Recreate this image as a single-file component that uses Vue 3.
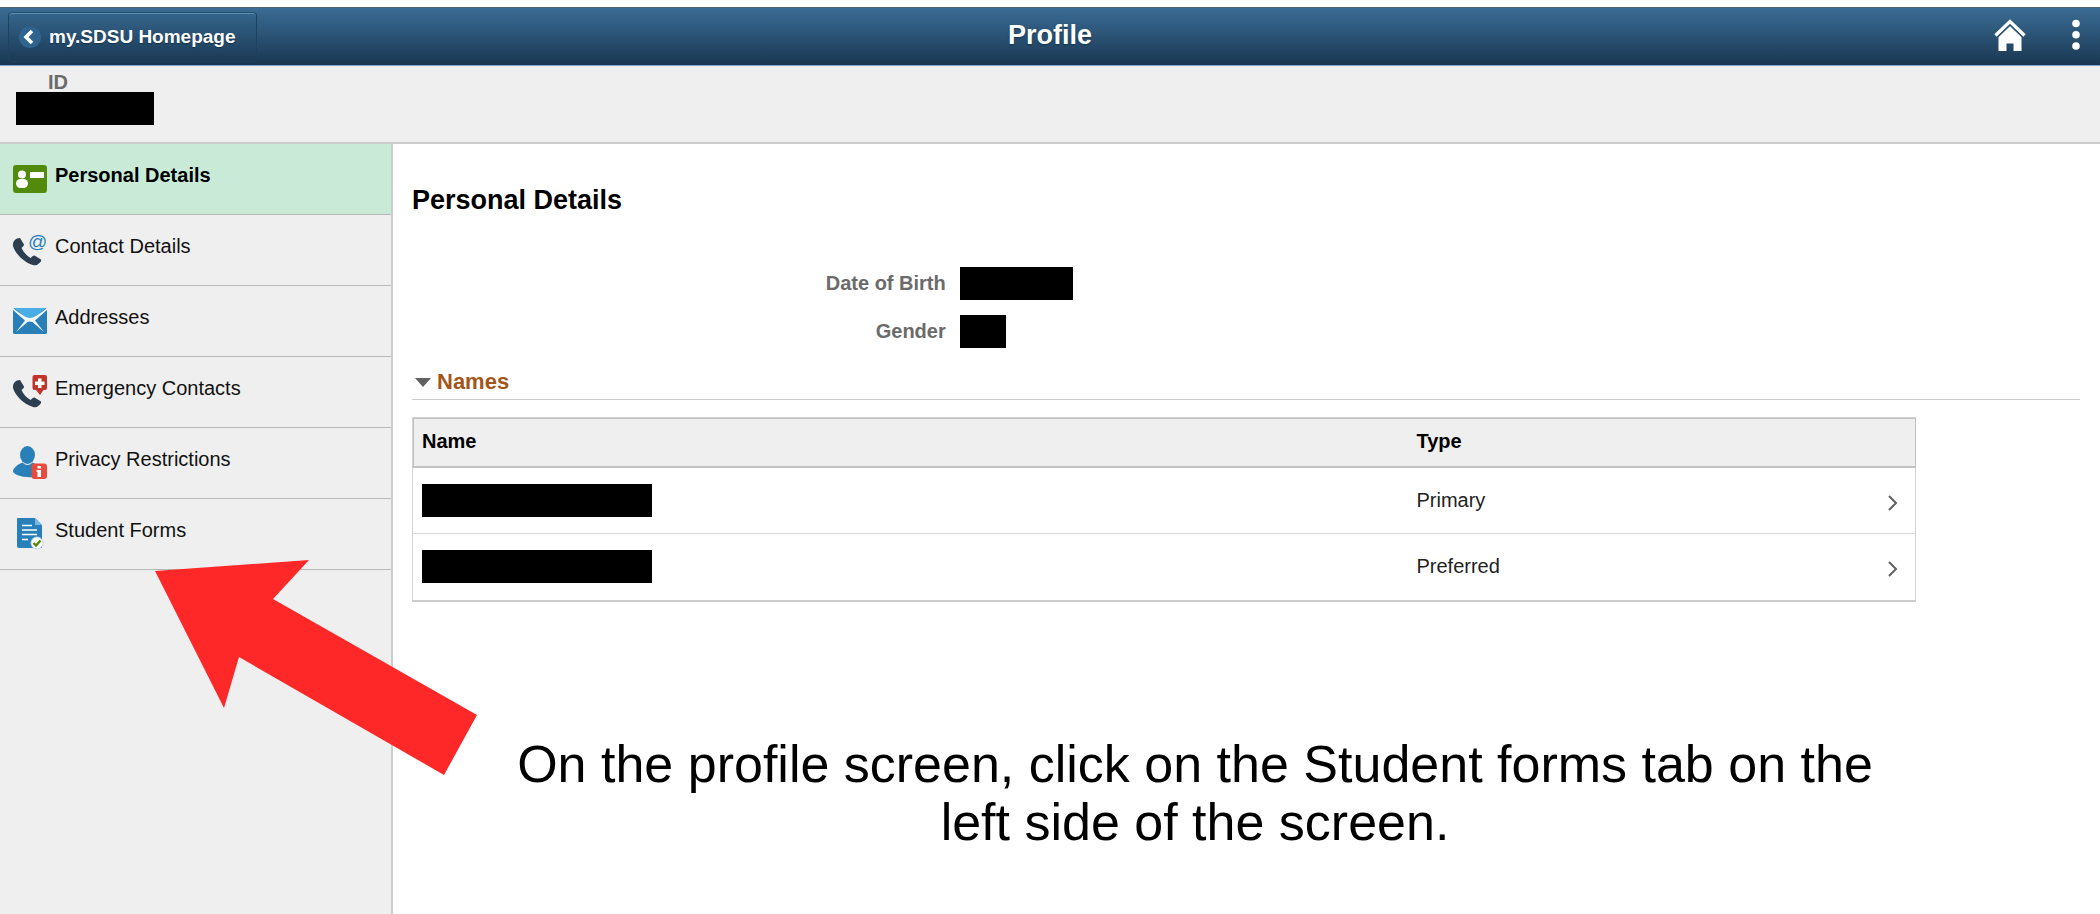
<template>
  <div class="page">
    <header class="topbar">
      <button class="back" type="button">
        <svg class="back-icon" viewBox="0 0 22 22" aria-hidden="true">
          <circle cx="11" cy="11" r="11" fill="#2f648e" />
          <path d="M13 5 L7 11 L13 17" fill="none" stroke="#fff" stroke-width="3.6" />
        </svg>
        <span>my.SDSU Homepage</span>
      </button>
      <h1 class="title">Profile</h1>
      <div class="actions">
        <button class="icon-button" type="button" aria-label="Home">
          <svg class="home" viewBox="0 0 32 32" aria-hidden="true">
            <path d="M1.5 16.5 L16 2.5 L30.5 16.5" fill="none" stroke="#fff" stroke-width="3.4" />
            <path d="M16 7 L27.5 18 V32 H19.5 V24.5 H12.5 V32 H4.5 V18 Z" fill="#fff" />
            <path d="M3.5 18 L16 6 L28.5 18" fill="none" stroke="#2b5677" stroke-width="1.2" />
          </svg>
        </button>
        <button class="icon-button" type="button" aria-label="Actions">
          <svg class="dots" viewBox="0 0 8 32" aria-hidden="true">
            <circle cx="4" cy="4.5" r="3.8" fill="#fff" />
            <circle cx="4" cy="15.7" r="3.8" fill="#fff" />
            <circle cx="4" cy="27" r="3.8" fill="#fff" />
          </svg>
        </button>
      </div>
    </header>

    <div class="id-bar">
      <div class="id-label">ID</div>
      <div class="redacted redacted--id"></div>
    </div>

    <div class="body">
      <nav class="sidebar">
        <a
          v-for="item in items"
          :key="item.icon"
          href="#"
          class="nav-item"
          :class="{ active: item.icon === selected }"
          @click.prevent="selected = item.icon"
        >
          <svg class="nav-icon" viewBox="0 0 34 34" aria-hidden="true">
            <g v-if="item.icon === 'card'">
              <rect y="3" width="34" height="28" rx="3" fill="#528a0b" />
              <circle cx="9" cy="12.5" r="4" fill="#fff" />
              <rect x="3" y="17" width="12" height="9" rx="4.5" fill="#fff" />
              <rect x="17" y="10" width="14" height="6" fill="#fff" />
            </g>
            <g v-else-if="item.icon === 'contact' || item.icon === 'emergency'">
              <path
                d="M1 8 Q3 5 7 5 L11 11.5 Q11.5 12.5 8.5 15 Q11 21 17.5 25 Q20 22 21.5 22.5 L28 26.5 Q28.5 28 27 29.5 Q24 33 20 32 C10 29 2 20 0 13 Q-.5 10 1 8 Z"
                fill="#2c3e50"
              />
              <text v-if="item.icon === 'contact'" x="15" y="15" class="at">@</text>
              <template v-else>
                <path d="M21.5 0 H32 Q34 0 34 2 V13 Q34 15 32 15 H30.5 L27 20 L23 15 H21.5 Q19.5 15 19.5 13 V2 Q19.5 0 21.5 0 Z" fill="#c0342b" />
                <path d="M25 3.5 H28.5 V6.5 H31.5 V10 H28.5 V13 H25 V10 H22 V6.5 H25 Z" fill="#fff" />
              </template>
            </g>
            <g v-else-if="item.icon === 'mail'">
              <rect y="4" width="34" height="26" rx="1.5" fill="#2980b9" />
              <path d="M1 4 H33 L17 17 Z" fill="#48aee3" />
              <path d="M0 4 Q12 14 17 14 Q22 14 34 4 L34 6 L22 16.5 L31 28 L19.5 18 Q17 17 14.5 18 L3 28 L12 16.5 L0 6 Z" fill="#f4f8fa" />
            </g>
            <g v-else-if="item.icon === 'person'">
              <ellipse cx="14.5" cy="9" rx="7.5" ry="9" fill="#2980b9" />
              <path d="M0 25 Q1 20 9.5 16.5 Q14.5 21.5 19.5 16.5 Q26 19 28.5 24 V30 Q14 33 4 29 Q0 27 0 25 Z" fill="#2980b9" />
              <rect x="18.5" y="17.5" width="15.500" height="15.5" rx="3" fill="#e84c3d" />
              <path d="M24.5 20 H28 V22.5 H24.5 Z M23.5 24 H28 V31 H24.5 V26 H23.5 Z" fill="#fff" />
            </g>
            <g v-else>
              <path d="M5 1 H22 L29 8 V31 H6 Q4 31 4 29 V2 Q4 1 5 1 Z" fill="#2980b9" />
              <path d="M22 1 L29 8 H22 Z" fill="#74b9e4" />
              <path d="M9 8.5 H19 M9 13 H24 M9 17.5 H24 M9 22.5 H15" stroke="#fff" stroke-width="1.7" />
              <circle cx="24" cy="26" r="6" fill="#fff" stroke="#b9dcef" />
              <path d="M20.5 26 L23 28.5 L27.5 23.5" fill="none" stroke="#528a0b" stroke-width="2.4" />
            </g>
          </svg>
          <span>{{ item.label }}</span>
        </a>
      </nav>

      <main class="content">
        <h2 class="heading">Personal Details</h2>

        <dl class="facts">
          <dt>Date of Birth</dt>
          <dd><div class="redacted redacted--birth"></div></dd>
          <dt>Gender</dt>
          <dd><div class="redacted redacted--gender"></div></dd>
        </dl>

        <h3 class="section">
          <button class="section-toggle" type="button" :aria-expanded="open" @click="open = !open">
            <svg class="triangle" viewBox="0 0 16 9" aria-hidden="true">
              <path d="M0 0 H16 L8 9 Z" fill="#606060" />
            </svg>
            <span>Names</span>
          </button>
        </h3>

        <div v-show="open" class="table-wrap">
          <table class="names">
            <thead>
              <tr>
                <th class="col-name" scope="col">Name</th>
                <th class="col-type" scope="col">Type</th>
                <th class="col-open"></th>
              </tr>
            </thead>
            <tbody>
              <tr v-for="type in types" :key="type">
                <td><div class="redacted redacted--name"></div></td>
                <td class="col-type">{{ type }}</td>
                <td>
                  <button class="row-open" type="button" :aria-label="`Open ${type} name`">
                    <svg class="chevron" viewBox="0 0 10 16" aria-hidden="true">
                      <path d="M1 1 L8 8 L1 15" fill="none" stroke="#606060" stroke-width="2" />
                    </svg>
                  </button>
                </td>
              </tr>
            </tbody>
          </table>
        </div>

        <p class="callout">
          On the profile screen, click on the Student forms tab on the left side of the screen.
        </p>
      </main>

      <!-- Points at the Student Forms tab -->
      <svg class="arrow" viewBox="0 0 322 215" aria-hidden="true">
        <path d="M0 11 L154 0 L118 39 L322 155 L289 215 L84 97 L69 148 Z" fill="#ff2828" />
      </svg>
    </div>
  </div>
</template>

<script setup>
import { ref } from "vue";

const items = [
  { icon: "card", label: "Personal Details" },
  { icon: "contact", label: "Contact Details" },
  { icon: "mail", label: "Addresses" },
  { icon: "emergency", label: "Emergency Contacts" },
  { icon: "person", label: "Privacy Restrictions" },
  { icon: "form", label: "Student Forms" },
];

const types = ["Primary", "Preferred"];

const selected = ref("card");
const open = ref(true);
</script>

<style>
body {
  margin: 0;
  background: #fff;
}
</style>

<style scoped>
.page {
  box-sizing: border-box;
  display: flex;
  flex-direction: column;
  min-height: 100vh;
  padding-top: 7px;
  font-family: Arial, "Liberation Sans", sans-serif;
  font-size: 20px;
  color: #000;
}

button {
  padding: 0;
  border: 0;
  background: none;
  font: inherit;
  color: inherit;
  cursor: pointer;
}

svg {
  display: block;
  flex: none;
}

.topbar {
  display: grid;
  grid-template-columns: 1fr auto 1fr;
  align-items: center;
  height: 57px;
  padding: 0 8px;
  border-top: 1px solid #55636d;
  border-bottom: 1px solid #7fa6cc;
  background: linear-gradient(#3a6c95, #1a3751);
  color: #fff;
}

.back {
  justify-self: start;
  display: flex;
  align-items: center;
  gap: 8px;
  height: 50px;
  padding: 0 20px 0 10px;
  border: 1px solid #1d4260;
  border-top-color: #23506f;
  border-radius: 4px;
  background: linear-gradient(#35658c, #1b3a55);
  box-shadow: inset 0 1px 0 #5b8fb8;
  font-size: 19px;
  font-weight: bold;
  text-shadow: 0 1px 1px #14304a;
}

.back-icon {
  width: 22px;
  height: 22px;
}

.title {
  margin: 0 0 4px;
  font-size: 27px;
  line-height: 32px;
  text-shadow: 0 1px 2px #14304a;
}

.actions {
  justify-self: end;
  display: flex;
  gap: 46px;
  padding: 0 12px 4px 0;
}

.home {
  width: 32px;
  height: 32px;
}

.dots {
  width: 8px;
  height: 32px;
}

.id-bar {
  padding: 6px 16px 17px;
  border-bottom: 2px solid #ccc;
  background: #efefef;
}

.id-label {
  padding-left: 32px;
  line-height: 20px;
  font-weight: bold;
  color: #6b6b6b;
}

.redacted {
  height: 33px;
  background: #000;
}

.redacted--id {
  width: 138px;
}

.redacted--birth {
  width: 113px;
}

.redacted--gender {
  width: 46px;
}

.redacted--name {
  width: 230px;
}

.body {
  position: relative;
  display: flex;
  flex: 1;
}

.sidebar {
  flex: none;
  width: 391px;
  border-right: 2px solid #ccc;
  background: #efefef;
}

.nav-item {
  box-sizing: border-box;
  display: flex;
  gap: 8px;
  height: 71px;
  padding: 18px 13px;
  border-bottom: 1px solid #b8b8b8;
  line-height: 26px;
  color: #111;
  text-decoration: none;
}

.nav-item.active {
  background: #c8ead7;
  font-weight: bold;
  color: #000;
}

.nav-icon {
  width: 34px;
  height: 34px;
  overflow: visible;
}

.at {
  font-size: 19px;
  fill: #2980b9;
}

.content {
  flex: 1;
  min-width: 0;
  padding: 40px 20px 20px 19px;
}

.heading {
  margin: 0;
  font-size: 27px;
  line-height: 32px;
}

.facts {
  display: grid;
  grid-template-columns: 32% 1fr;
  gap: 15px 14px;
  align-items: center;
  margin: 51px 0 20px;
}

.facts dt {
  text-align: right;
  font-weight: bold;
  color: #6b6b6b;
}

.facts dd {
  margin: 0;
}

.section {
  margin: 0 0 17px;
  padding-bottom: 3px;
  border-bottom: 1px solid #ccc;
  font-size: 22px;
  line-height: 28px;
  color: #a3561a;
}

.section-toggle {
  display: flex;
  align-items: center;
  gap: 6px;
  padding-left: 3px;
}

.triangle {
  width: 16px;
  height: 9px;
}

.table-wrap {
  padding-right: 164px;
}

.names {
  width: 100%;
  border: 1px solid #d4d4d4;
  border-bottom: 2px solid #ccc;
  border-collapse: collapse;
  table-layout: fixed;
}

.names th,
.names td {
  box-sizing: border-box;
  padding: 0 9px;
  text-align: left;
}

.names th {
  height: 49px;
  border-bottom: 2px solid #c4c4c4;
  background: #efefef;
}

.names thead {
  outline: 1px solid #c0c0c0;
  outline-offset: -1px;
}

.names td {
  height: 67px;
  border-bottom: 1px solid #d8d8d8;
  color: #222;
}

.names .col-type {
  padding-left: 12px;
}

.col-name {
  width: 66%;
}

.col-open {
  width: 46px;
}

.row-open {
  display: block;
  margin-left: auto;
  padding: 5px 8px 0;
}

.chevron {
  width: 10px;
  height: 16px;
}

.callout {
  margin: 133px 102px 0 0;
  padding: 0 90px;
  font-size: 52px;
  line-height: 58px;
  text-align: center;
}

.arrow {
  position: absolute;
  top: 416px;
  left: 155px;
  width: 322px;
  height: 215px;
  pointer-events: none;
}
</style>
